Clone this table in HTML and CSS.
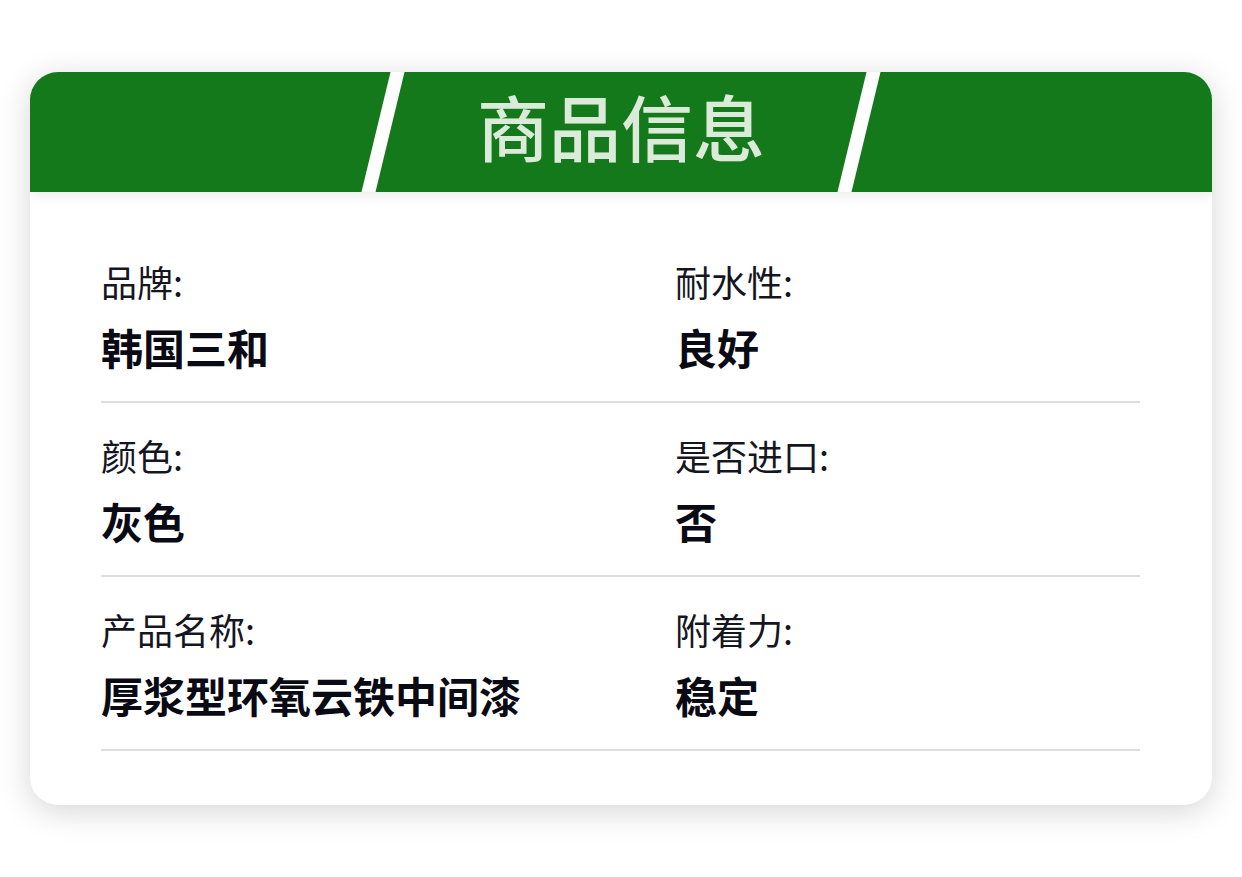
FILE: index.html
```html
<!DOCTYPE html>
<html lang="zh-CN">
<head>
<meta charset="utf-8">
<title>商品信息</title>
<link rel="stylesheet" href="styles.css">
</head>
<body>
<div class="card">
  <div class="header">
    <span class="slash"></span>
    <h1 class="title">商品信息</h1>
    <span class="slash"></span>
  </div>
  <div class="body">
    <div class="row">
      <div class="cell"><div class="label">品牌:</div><div class="value">韩国三和</div></div>
      <div class="cell"><div class="label">耐水性:</div><div class="value">良好</div></div>
    </div>
    <div class="row">
      <div class="cell"><div class="label">颜色:</div><div class="value">灰色</div></div>
      <div class="cell"><div class="label">是否进口:</div><div class="value">否</div></div>
    </div>
    <div class="row">
      <div class="cell"><div class="label">产品名称:</div><div class="value">厚浆型环氧云铁中间漆</div></div>
      <div class="cell"><div class="label">附着力:</div><div class="value">稳定</div></div>
    </div>
  </div>
</div>
</body>
</html>
```

FILE: styles.css
```css
* { box-sizing: border-box; }
html, body {
  margin: 0;
  padding: 0;
  background: #ffffff;
}
body {
  font-family: "Noto Sans CJK SC", "Noto Sans", sans-serif;
  padding: 72px 0 72px;
  min-height: 877px;
}
.card {
  margin: 0 30px;
  height: 733px;
  background: #ffffff;
  border-radius: 28px;
  overflow: hidden;
  box-shadow: 0 6px 32px rgba(0, 0, 0, 0.17);
}
.header {
  height: 120px;
  background: #13791a;
  display: flex;
  justify-content: center;
  align-items: stretch;
  box-shadow: 0 3px 12px rgba(0, 0, 0, 0.08);
  position: relative;
}
.slash {
  width: 14px;
  background: #ffffff;
  transform: skewX(-13.6deg);
}
.title {
  width: 462px;
  margin: 0;
  font-size: 72px;
  font-weight: 500;
  line-height: 1;
  color: #dcebd9;
  display: flex;
  align-items: center;
  justify-content: center;
  padding-bottom: 14px;
  letter-spacing: 0;
}
.body {
  padding: 37px 72px 0 71px;
}
.row {
  display: grid;
  grid-template-columns: 574px 1fr;
  padding: 34px 0 33px;
  border-bottom: 2px solid #dcdce2;
}
.label {
  font-size: 36px;
  line-height: 37px;
  color: #16161f;
  font-weight: 400;
}
.value {
  margin-top: 26px;
  font-size: 42px;
  line-height: 42px;
  font-weight: 700;
  color: #0a0a14;
}
```
